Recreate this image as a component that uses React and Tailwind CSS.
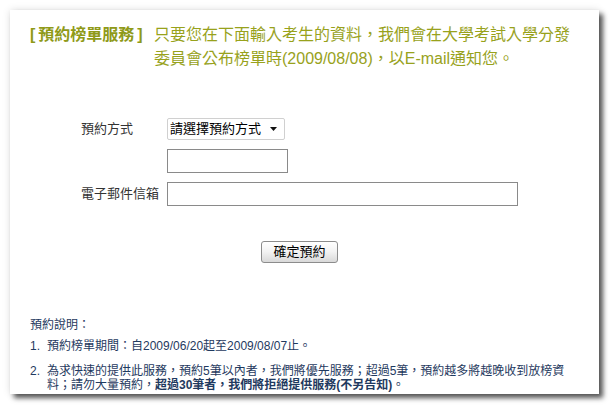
import React from 'react';

const olive = 'text-[#98a21c]';

const App = () => {
  return (
    <div className="w-[610px] h-[406px] bg-white overflow-hidden pt-[10px] pl-[10px] font-['Liberation_Sans','Noto_Sans_CJK_TC',sans-serif]">
      <div className="w-[589px] h-[384px] bg-white shadow-[4px_4px_5px_rgba(0,0,0,0.65),0_0_8px_rgba(0,0,0,0.12)]">
        {/* 標題 */}
        <div className={`flex pt-[13px] pl-[20px] text-[16px] leading-[24px] ${olive}`}>
          <div className="w-[124px] font-bold text-[#8f9a18]">
            <span className="pr-[3px]">[</span>預約榜單服務<span className="pl-[3px]">]</span>
          </div>
          <div className="w-[422px]">
            只要您在下面輸入考生的資料，我們會在大學考試入學分發委員會公布榜單時(2009/08/08)，以E-mail通知您。
          </div>
        </div>

        {/* 表單 */}
        <div className="mt-[47px] pl-[71px] grid grid-cols-[86px_auto] gap-y-[9px] text-[13px] text-[#333]">
          <div className="h-[22px] flex items-center">預約方式</div>
          <div className="relative w-[118px] h-[22px]">
            <select className="appearance-none w-full h-full border border-[#d0d0d0] rounded-[2px] bg-white pl-[2px] text-[13px] text-black outline-none">
              <option>請選擇預約方式</option>
            </select>
            <svg className="absolute right-[8px] top-[9px] pointer-events-none" width="7" height="4" viewBox="0 0 7 4">
              <path d="M0 0H7L3.5 4Z" fill="#111" />
            </svg>
          </div>

          <div />
          <input className="w-[121px] h-[24px] border border-[#8a8a8a] bg-white outline-none" />

          <div className="h-[24px] flex items-center">電子郵件信箱</div>
          <input className="w-[351px] h-[24px] border border-[#8a8a8a] bg-white outline-none" />
        </div>

        <div className="mt-[33px] ml-[251px]">
          <button className="w-[77px] h-[22px] border border-[#8c8c8c] rounded-[3px] bg-gradient-to-b from-white via-[#f2f2f2] to-[#d9d9d9] text-[13px] text-black leading-none">
            確定預約
          </button>
        </div>

        {/* 說明 */}
        <div className="mt-[53px] pl-[20px] text-[12px] text-[#1f3a60]">
          <div className="leading-[18px]">預約說明：</div>
          <ol className="mt-[5px]">
            <li className="flex leading-[14px]">
              <span className="w-[17px] shrink-0">1.</span>
              <span>預約榜單期間：自2009/06/20起至2009/08/07止。</span>
            </li>
            <li className="flex leading-[14px] mt-[11px]">
              <span className="w-[17px] shrink-0">2.</span>
              <span className="w-[522px]">
                為求快速的提供此服務，預約5筆以內者，我們將優先服務；超過5筆，預約越多將越晚收到放榜資料；請勿大量預約，<b className="leading-[14px]">超過30筆者，我們將拒絕提供服務(不另告知)</b>。
              </span>
            </li>
          </ol>
        </div>
      </div>
    </div>
  );
};

export default App;
